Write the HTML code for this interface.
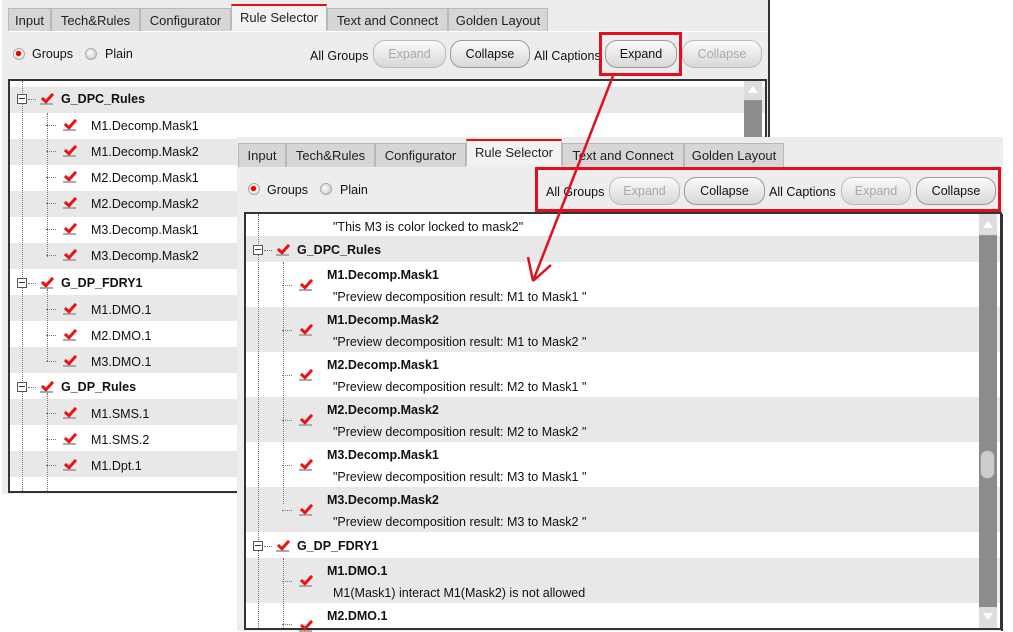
<!DOCTYPE html>
<html><head><meta charset="utf-8"><style>
*{box-sizing:border-box;margin:0;padding:0}
body{width:1013px;height:631px;background:#fff;position:relative;overflow:hidden;font-family:"Liberation Sans",sans-serif;font-size:12.5px;color:#111}
.a{position:absolute}
.panel{background:#ededed}
.tab{position:absolute;height:24px;background:#d6d6d6;border:1px solid #b8b8b8;border-bottom:none;text-align:center;line-height:23px;font-size:13px;color:#222}
.tab.on{background:#f2f2f2;border-top:2px solid #e01010;height:26px}
.btn{position:absolute;height:28px;border:1px solid #9a9a9a;border-radius:12px;background:linear-gradient(#fafafa,#d8d8d8);text-align:center;line-height:26px;font-size:12.5px;color:#111}
.btn.dis{color:#aaa;border-color:#bbb}
.lbl{position:absolute;font-size:12.5px;line-height:14px}
.radio{position:absolute;width:12px;height:12px;border-radius:50%;background:radial-gradient(circle at 40% 40%,#fff,#bbb);border:1px solid #aaa}
.radio.on{background:radial-gradient(circle at 45% 45%,#e00 30%,#fff 40%,#ccc)}
.box{position:absolute;border:2px solid #333;background:#fff;overflow:hidden}
.row{position:absolute;left:0;right:0}
.g{background:#e8e8e9}
.chk{position:absolute;width:13px;height:12px;border-bottom:2px solid #aaa}
.chk:after{content:"";position:absolute;left:4px;top:-2px;width:4px;height:9px;border-right:3px solid #e11;border-bottom:3px solid #e11;transform:rotate(42deg)}
.exp{position:absolute;width:10px;height:10px;border:1px solid #555;background:#fff}
.exp:after{content:"";position:absolute;left:1px;top:3px;width:6px;height:1px;background:#333}
.vl{position:absolute;border-left:1px dotted #777}
.hl{position:absolute;border-top:1px dotted #777;width:10px}
.t{position:absolute;white-space:nowrap;font-size:12.5px}
.b{font-weight:bold}
.sb{position:absolute;background:#8c8c8c;width:18px}
.red{position:absolute;border:3px solid #e01020}
</style></head><body>

<div class="a panel" style="left:2px;top:0;width:768px;height:494px"></div>
<div class="a" style="left:768px;top:0;width:2px;height:138px;background:#333"></div>
<div class="tab" style="left:8px;top:8px;width:43px">Input</div>
<div class="tab" style="left:51px;top:8px;width:89px">Tech&amp;Rules</div>
<div class="tab" style="left:140px;top:8px;width:91px">Configurator</div>
<div class="tab on" style="left:231px;top:4px;width:96px">Rule Selector</div>
<div class="tab" style="left:327px;top:8px;width:121px">Text and Connect</div>
<div class="tab" style="left:448px;top:8px;width:100px">Golden Layout</div>
<div class="a" style="left:8px;top:31px;width:760px;height:1px;background:#fff"></div>
<div class="radio on" style="left:13px;top:48px"></div><div class="lbl" style="left:32px;top:47px">Groups</div>
<div class="radio" style="left:85px;top:48px"></div><div class="lbl" style="left:105px;top:47px">Plain</div>
<div class="lbl" style="left:310px;top:49px">All Groups</div>
<div class="btn dis" style="left:373px;top:40px;width:73px">Expand</div>
<div class="btn" style="left:450px;top:40px;width:80px">Collapse</div>
<div class="lbl" style="left:534px;top:49px">All Captions</div>
<div class="btn" style="left:605px;top:40px;width:72px">Expand</div>
<div class="btn dis" style="left:682px;top:40px;width:80px">Collapse</div>

<div class="box" style="left:8px;top:79px;width:759px;height:414px">
 <div class="row g" style="top:6px;height:26px"></div>
 <div class="row g" style="top:58px;height:26px"></div>
 <div class="row g" style="top:110px;height:26px"></div>
 <div class="row g" style="top:162px;height:26px"></div>
 <div class="row g" style="top:214px;height:26px"></div>
 <div class="row g" style="top:266px;height:26px"></div>
 <div class="row g" style="top:318px;height:26px"></div>
 <div class="row g" style="top:370px;height:26px"></div>
 <div class="vl" style="left:12px;top:0;height:412px"></div>
 <div class="vl" style="left:37px;top:32px;height:144px"></div>
 <div class="vl" style="left:37px;top:208px;height:72px"></div>
 <div class="vl" style="left:37px;top:312px;height:100px"></div>
</div>
<div class="sb" style="left:744px;top:81px;height:410px"></div>
<div class="a" style="left:744px;top:81px;width:18px;height:20px;background:#ddd;border-bottom:1px solid #999"></div>
<div class="a" style="left:748px;top:86px;border-left:5px solid transparent;border-right:5px solid transparent;border-bottom:7px solid #fff"></div>

<div class="a panel" style="left:237px;top:137px;width:766px;height:494px"></div>
<div class="tab" style="left:238px;top:143px;width:48px">Input</div>
<div class="tab" style="left:286px;top:143px;width:89px">Tech&amp;Rules</div>
<div class="tab" style="left:375px;top:143px;width:91px">Configurator</div>
<div class="tab on" style="left:466px;top:139px;width:96px">Rule Selector</div>
<div class="tab" style="left:562px;top:143px;width:122px">Text and Connect</div>
<div class="tab" style="left:684px;top:143px;width:100px">Golden Layout</div>
<div class="radio on" style="left:248px;top:183px"></div><div class="lbl" style="left:267px;top:183px">Groups</div>
<div class="radio" style="left:320px;top:183px"></div><div class="lbl" style="left:340px;top:183px">Plain</div>
<div class="lbl" style="left:546px;top:185px">All Groups</div>
<div class="btn dis" style="left:609px;top:177px;width:71px">Expand</div>
<div class="btn" style="left:684px;top:177px;width:81px">Collapse</div>
<div class="lbl" style="left:769px;top:185px">All Captions</div>
<div class="btn dis" style="left:841px;top:177px;width:70px">Expand</div>
<div class="btn" style="left:916px;top:177px;width:80px">Collapse</div>

<div class="box" style="left:244px;top:212px;width:758px;height:418px">
 <div class="row g" style="top:22px;height:26px"></div>
 <div class="row g" style="top:93px;height:45px"></div>
 <div class="row g" style="top:183px;height:45px"></div>
 <div class="row g" style="top:273px;height:45px"></div>
 <div class="row g" style="top:344px;height:45px"></div>
 <div class="vl" style="left:12px;top:0;height:418px"></div>
 <div class="vl" style="left:37px;top:48px;height:242px"></div>
 <div class="vl" style="left:37px;top:344px;height:74px"></div>
</div>
<div class="sb" style="left:979px;top:214px;height:414px"></div>
<div class="a" style="left:979px;top:214px;width:18px;height:22px;background:#ddd;border-bottom:1px solid #999"></div>
<div class="a" style="left:983px;top:221px;border-left:5px solid transparent;border-right:5px solid transparent;border-bottom:7px solid #fff"></div>
<div class="a" style="left:979px;top:607px;width:18px;height:21px;background:#ddd"></div>
<div class="a" style="left:983px;top:613px;border-left:5px solid transparent;border-right:5px solid transparent;border-top:7px solid #fff"></div>
<div class="a" style="left:980px;top:450px;width:15px;height:29px;border-radius:7px;background:#ccc;border:1px solid #999"></div>
<div class="a" style="left:1001px;top:214px;width:2px;height:417px;background:#333"></div>

<div class="exp" style="left:17px;top:94px"></div><div class="hl" style="left:28px;top:99px;width:8px"></div><div class="chk" style="left:40px;top:93px"></div><div class="t b" style="left:61px;top:92px">G_DPC_Rules</div>
<div class="hl" style="left:46px;top:125px"></div><div class="chk" style="left:63px;top:119px"></div><div class="t" style="left:91px;top:119px">M1.Decomp.Mask1</div>
<div class="hl" style="left:46px;top:151px"></div><div class="chk" style="left:63px;top:145px"></div><div class="t" style="left:91px;top:145px">M1.Decomp.Mask2</div>
<div class="hl" style="left:46px;top:177px"></div><div class="chk" style="left:63px;top:171px"></div><div class="t" style="left:91px;top:171px">M2.Decomp.Mask1</div>
<div class="hl" style="left:46px;top:203px"></div><div class="chk" style="left:63px;top:197px"></div><div class="t" style="left:91px;top:197px">M2.Decomp.Mask2</div>
<div class="hl" style="left:46px;top:229px"></div><div class="chk" style="left:63px;top:223px"></div><div class="t" style="left:91px;top:223px">M3.Decomp.Mask1</div>
<div class="hl" style="left:46px;top:255px"></div><div class="chk" style="left:63px;top:249px"></div><div class="t" style="left:91px;top:249px">M3.Decomp.Mask2</div>
<div class="exp" style="left:17px;top:278px"></div><div class="hl" style="left:28px;top:283px;width:8px"></div><div class="chk" style="left:40px;top:277px"></div><div class="t b" style="left:61px;top:276px">G_DP_FDRY1</div>
<div class="hl" style="left:46px;top:309px"></div><div class="chk" style="left:63px;top:303px"></div><div class="t" style="left:91px;top:303px">M1.DMO.1</div>
<div class="hl" style="left:46px;top:335px"></div><div class="chk" style="left:63px;top:329px"></div><div class="t" style="left:91px;top:329px">M2.DMO.1</div>
<div class="hl" style="left:46px;top:361px"></div><div class="chk" style="left:63px;top:355px"></div><div class="t" style="left:91px;top:355px">M3.DMO.1</div>
<div class="exp" style="left:17px;top:382px"></div><div class="hl" style="left:28px;top:387px;width:8px"></div><div class="chk" style="left:40px;top:381px"></div><div class="t b" style="left:61px;top:380px">G_DP_Rules</div>
<div class="hl" style="left:46px;top:413px"></div><div class="chk" style="left:63px;top:407px"></div><div class="t" style="left:91px;top:407px">M1.SMS.1</div>
<div class="hl" style="left:46px;top:439px"></div><div class="chk" style="left:63px;top:433px"></div><div class="t" style="left:91px;top:433px">M1.SMS.2</div>
<div class="hl" style="left:46px;top:465px"></div><div class="chk" style="left:63px;top:459px"></div><div class="t" style="left:91px;top:459px">M1.Dpt.1</div>

<div class="t" style="left:333px;top:220px">"This M3 is color locked to mask2"</div>
<div class="exp" style="left:253px;top:245px"></div><div class="hl" style="left:264px;top:250px;width:8px"></div><div class="chk" style="left:276px;top:244px"></div><div class="t b" style="left:297px;top:243px">G_DPC_Rules</div>
<div class="hl" style="left:282px;top:285px"></div><div class="chk" style="left:299px;top:279px"></div><div class="t b" style="left:327px;top:268px">M1.Decomp.Mask1</div><div class="t" style="left:333px;top:290px">"Preview decomposition result: M1 to Mask1 "</div>
<div class="hl" style="left:282px;top:330px"></div><div class="chk" style="left:299px;top:324px"></div><div class="t b" style="left:327px;top:313px">M1.Decomp.Mask2</div><div class="t" style="left:333px;top:335px">"Preview decomposition result: M1 to Mask2 "</div>
<div class="hl" style="left:282px;top:375px"></div><div class="chk" style="left:299px;top:369px"></div><div class="t b" style="left:327px;top:358px">M2.Decomp.Mask1</div><div class="t" style="left:333px;top:380px">"Preview decomposition result: M2 to Mask1 "</div>
<div class="hl" style="left:282px;top:420px"></div><div class="chk" style="left:299px;top:414px"></div><div class="t b" style="left:327px;top:403px">M2.Decomp.Mask2</div><div class="t" style="left:333px;top:425px">"Preview decomposition result: M2 to Mask2 "</div>
<div class="hl" style="left:282px;top:465px"></div><div class="chk" style="left:299px;top:459px"></div><div class="t b" style="left:327px;top:448px">M3.Decomp.Mask1</div><div class="t" style="left:333px;top:470px">"Preview decomposition result: M3 to Mask1 "</div>
<div class="hl" style="left:282px;top:510px"></div><div class="chk" style="left:299px;top:504px"></div><div class="t b" style="left:327px;top:493px">M3.Decomp.Mask2</div><div class="t" style="left:333px;top:515px">"Preview decomposition result: M3 to Mask2 "</div>
<div class="exp" style="left:253px;top:541px"></div><div class="hl" style="left:264px;top:546px;width:8px"></div><div class="chk" style="left:276px;top:540px"></div><div class="t b" style="left:297px;top:539px">G_DP_FDRY1</div>
<div class="hl" style="left:282px;top:581px"></div><div class="chk" style="left:299px;top:575px"></div><div class="t b" style="left:327px;top:564px">M1.DMO.1</div><div class="t" style="left:333px;top:586px">M1(Mask1) interact M1(Mask2) is not allowed</div>
<div class="hl" style="left:282px;top:624px"></div><div class="chk" style="left:299px;top:620px"></div><div class="t b" style="left:327px;top:609px">M2.DMO.1</div>

<div class="red" style="left:599px;top:32px;width:83px;height:44px"></div>
<div class="red" style="left:535px;top:167px;width:466px;height:45px"></div>
<svg class="a" style="left:0;top:0" width="1013" height="631"><g stroke="#e01020" stroke-width="2.5" fill="none"><line x1="613" y1="76" x2="533" y2="281"/><line x1="533" y1="281" x2="528" y2="257"/><line x1="533" y1="281" x2="551" y2="265"/></g></svg>
</body></html>
